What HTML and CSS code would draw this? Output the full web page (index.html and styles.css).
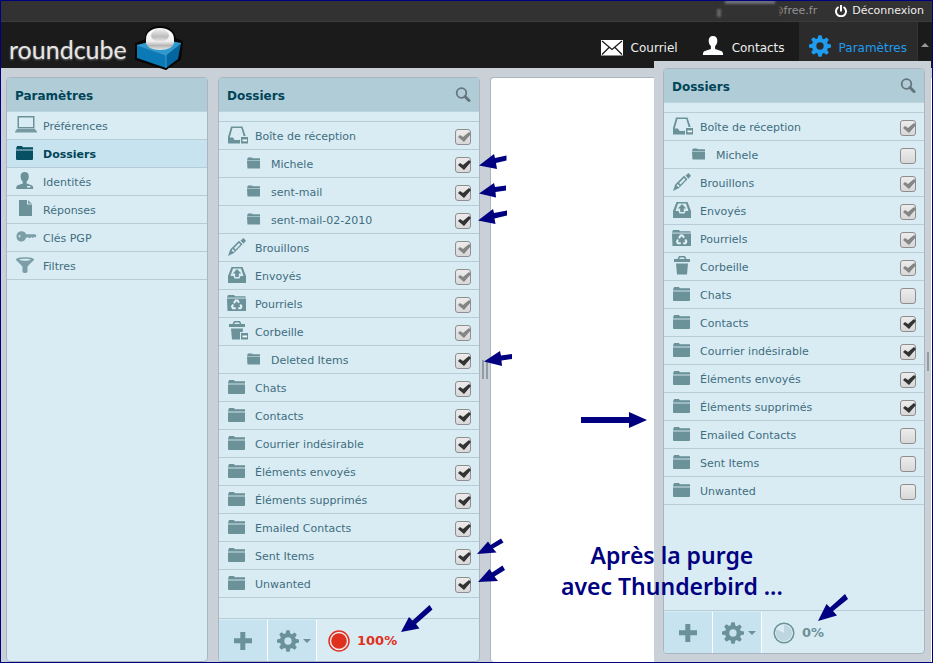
FILE: index.html
```html
<!DOCTYPE html>
<html lang="fr">
<head>
<meta charset="utf-8">
<title>Roundcube – Dossiers</title>
<link rel="stylesheet" href="styles.css">
</head>
<body>
<svg class="sprite" aria-hidden="true">
  <symbol id="folder" viewBox="0 0 22 21"><path opacity=".55" d="M1 4h17v4H1z"/><path d="M2 3h5l1 1.500h10V6H1.500z"/><path d="M1 8h17v8.500h-.5v.5h-16v-.5H1z"/></symbol>
  <symbol id="subfolder" viewBox="0 0 22 21"><path opacity=".5" d="M4 5h13v3H4z"/><path d="M5 4.500h4l1 1h7V7H4.500z"/><path d="M4 8h13v7.500H4.500z"/></symbol>
  <symbol id="minus" viewBox="0 0 22 21"><path d="M13 11h8v8h-8z" fill="#d9ecf4"/><path d="M14 12h7v6.500h-7z"/><path d="M15.500 14.500h4.500v1.800h-4.500z" fill="#fff"/></symbol>
  <symbol id="inbox" viewBox="0 0 22 21"><path fill-rule="evenodd" d="M4 1.500h11.500L19 12v6.500H1V12zM5.500 3 2.800 12.500H6L7.500 15h5L14 12.500h3L14.300 3z"/></symbol>
  <symbol id="pencil" viewBox="0 0 22 21"><path fill-rule="evenodd" d="m1 19 2.200-6.500L12 3.700l3.500 3.500L7 16zM4.500 13.200l2 2 1.200-1.200-2-2zM7 11l1.500 1.500 5-5L12 6z"/><path d="M13.500 3.500 16.500 1 19 3.700l-2.500 3z"/></symbol>
  <symbol id="outbox" viewBox="0 0 22 21"><path fill-rule="evenodd" d="M4.500 2h11L19 11v7H1v-7zM6 3.500 3.500 11h3l1 2.500h5l1-2.500h3L14 3.500z"/><path d="m10 4 4.200 4.500h-2.400V12H8.200V8.500H5.800z"/></symbol>
  <symbol id="junk" viewBox="0 0 22 21"><path d="M1 2h6l1 1.200h10.500V4.500H0z"/><path opacity=".5" d="M0 4.500h19V6H0z"/><path d="M0 6h19v12H.5z"/><g fill="none" stroke="#e4f1f6" stroke-width="2"><path d="m7 10.200 1.600-2.700h2l1.400 2.200M13.300 11.500l1.100 2-.9 1.700h-2.300M8.800 15.200H5.900L5 13.500l1.100-2"/></g></symbol>
  <symbol id="trash" viewBox="0 0 22 21"><path fill-rule="evenodd" d="M2 3h3.500L7 0h6l1.500 3H18v3H2zM8 1.500 7.300 3h5.400L12 1.500z"/><path d="M4 7.500h12l-1 11H5z"/></symbol>
  <symbol id="laptop" viewBox="0 0 22 21"><path fill-rule="evenodd" d="M2.500 1h17v12h-17zM4 2.500V12h14V2.500z"/><path opacity=".9" d="M2.500 13.500h17l2.500 3v1H0v-1z"/></symbol>
  <symbol id="person" viewBox="0 0 22 21"><path fill-rule="evenodd" d="M9.800 1c2.700 0 4.200 2 4 4.700-.1 2.300-1 4-2.200 5v1.800l5 1.800c1.200.5 1.600 1.700 1.600 3.700H1.200c0-2 .4-3.200 1.600-3.700l5-1.800v-1.800c-1.200-1-2.100-2.700-2.200-5C5.400 3 7 1 9.800 1zM12 15v1.500h3.500V15z"/></symbol>
  <symbol id="page" viewBox="0 0 22 21"><path d="M4 1h8v4.500h5V17H4z"/><path opacity=".8" d="m13 1 4 3.800h-4z"/></symbol>
  <symbol id="key" viewBox="0 0 22 21"><path opacity=".85" fill-rule="evenodd" d="M6.500 4.300c2.400 0 4 1.200 4.600 3h9.200l1.200 1.600-1.200 1.700-1.300-.8-1 1.500-1.500-1.200-1.500 1.200-1.300-.8h-2.600c-.8 2.700-2.300 4-4.600 4-3 0-5-2.100-5-5.100s2-5.100 5-5.100zM3.800 8.300v2h1.600v-2z"/></symbol>
  <symbol id="funnel" viewBox="0 0 22 21"><path fill-rule="evenodd" opacity=".85" d="M1 4.500c0-3 18-3 18 0 0 1.300-6.500 6-6.500 7.500V17c-1 1.300-4 1.300-5 0v-5C7.500 10.500 1 5.800 1 4.500zm3 .2c3 1.300 9 1.300 12 0-3-1.300-9-1.300-12 0z"/></symbol>
  <symbol id="search" viewBox="0 0 16 16"><circle cx="6.500" cy="6" r="4.800" fill="none" stroke="#65757c" stroke-width="1.800"/><path d="m10 9.500 4 4" stroke="#65757c" stroke-width="3" stroke-linecap="round"/></symbol>
  <symbol id="plus" viewBox="0 0 18 18"><path d="M6.300 0h5v6.300H18v5h-6.700V18h-5v-6.700H0v-5h6.300z"/></symbol>
  <symbol id="gear" viewBox="0 0 24 24"><path fill-rule="evenodd" d="m10 1 .5-.8h3L14 1l.5 2.700 1.800.8 2.300-1.600 1 .1 1.600 1.600.2 1-1.700 2.300.8 1.800 2.700.5.800.5v2.800l-.8.500-2.700.5-.8 1.800 1.700 2.300-.2 1-1.600 1.600-1 .2-2.300-1.700-1.800.8L14 23l-.5.800h-3L10 23l-.5-2.700-1.800-.8-2.300 1.700-1-.2-1.600-1.600-.2-1 1.700-2.300-.8-1.800L.8 13.800 0 13.300v-2.800l.8-.5 2.700-.5.800-1.800-1.700-2.300.2-1 1.600-1.600 1-.1 2.300 1.600 1.800-.8zM12 8a4 4 0 1 0 0 8 4 4 0 0 0 0-8z"/></symbol>
</svg>

<div class="topbar">
  <span class="user"><span class="smudge"></span>@free.fr</span>
  <a class="logout" href="#"><svg class="power" viewBox="0 0 12 12"><path d="M3.500 2a5 5 0 1 0 5 0M6 0v6.500" fill="none" stroke="#fff" stroke-width="2"/></svg>Déconnexion</a>
</div>

<header class="header">
  <a class="logo" href="#"><span class="wordmark">roundcube</span>
    <svg class="cube" viewBox="0 0 48 44">
      <defs>
        <linearGradient id="ball" x1="0" y1="0" x2="0" y2="1"><stop offset="0" stop-color="#fff"/><stop offset=".6" stop-color="#efefef"/><stop offset=".8" stop-color="#b5b5b5"/><stop offset="1" stop-color="#e8e8e8"/></linearGradient>
        <linearGradient id="shine" x1="0" y1="0" x2="0" y2="1"><stop offset="0" stop-color="#eee"/><stop offset=".6" stop-color="#bdbdbd"/><stop offset="1" stop-color="#ececec"/></linearGradient>
      </defs>
      <path d="M1 18 11 14C11 5 17 1 25 1s14 4 15 12l7 3-2 17-14 10L1 33z" fill="#060606" stroke="#060606" stroke-width="2" stroke-linejoin="round"/>
      <path d="m2 19 23-6 21 4-15 12z" fill="#2d9ad0"/>
      <path d="m2 19 29 10v13L2 32z" fill="#0b79b5"/>
      <path d="m31 29 15-12-3 16-12 9z" fill="#0466a0"/>
      <path d="m2 19 29 10 15-12M31 29v13" fill="none" stroke="#4aa9d8" stroke-width=".8"/>
      <path d="M11 13C11 6 17 2 25 2s14 4 14 11v3c0 5-6 8-14 8s-14-3-14-8z" fill="url(#ball)"/>
      <ellipse cx="25" cy="9.500" rx="9" ry="6.500" fill="url(#shine)"/>
    </svg>
  </a>
  <nav class="nav">
    <a href="#"><svg class="nav-icon" viewBox="0 0 22 22"><path d="M0 5h22v15.500H0z" fill="#fff"/><path d="m1 6 10 8.500L21 6M1 19.500l7-7M21 19.500l-7-7" fill="none" stroke="#1b1b1b" stroke-width="1.300"/></svg>Courriel</a>
    <a href="#"><svg class="nav-icon" viewBox="0 0 22 22"><path d="M11 1c3 0 4.500 2 4.300 5-.1 2.500-1 4-2.200 5v3l6 2c1.500.6 2 1.500 2 4H.9c0-2.500.5-3.400 2-4l6-2v-3c-1.200-1-2.100-2.500-2.200-5C6.500 3 8 1 11 1z" fill="#fff"/></svg>Contacts</a>
    <a class="active" href="#"><svg class="nav-icon"><use href="#gear"/></svg>Paramètres</a>
  </nav>
  <button class="toggle" type="button" aria-label="Réduire"></button>
</header>

<main class="main">
  <section class="panel settings">
    <h2 class="title">Paramètres</h2>
    <ul class="list">
      <li><a class="row" href="#"><svg class="icon"><use href="#laptop"/></svg>Préférences</a></li>
      <li><a class="row selected" href="#"><svg class="icon"><use href="#folder"/></svg>Dossiers</a></li>
      <li><a class="row" href="#"><svg class="icon"><use href="#person"/></svg>Identités</a></li>
      <li><a class="row" href="#"><svg class="icon"><use href="#page"/></svg>Réponses</a></li>
      <li><a class="row" href="#"><svg class="icon"><use href="#key"/></svg>Clés PGP</a></li>
      <li><a class="row" href="#"><svg class="icon"><use href="#funnel"/></svg>Filtres</a></li>
    </ul>
  </section>

  <section class="panel folders">
    <h2 class="title">Dossiers<svg class="search"><use href="#search"/></svg></h2>
    <ul class="list spaced">
      <li><label class="row"><svg class="icon"><use href="#inbox"/><use href="#minus"/></svg>Boîte de réception<input type="checkbox" checked disabled></label></li>
      <li><label class="row sub"><svg class="icon"><use href="#subfolder"/></svg>Michele<input type="checkbox" checked></label></li>
      <li><label class="row sub"><svg class="icon"><use href="#subfolder"/></svg>sent-mail<input type="checkbox" checked></label></li>
      <li><label class="row sub"><svg class="icon"><use href="#subfolder"/></svg>sent-mail-02-2010<input type="checkbox" checked></label></li>
      <li><label class="row"><svg class="icon"><use href="#pencil"/></svg>Brouillons<input type="checkbox" checked disabled></label></li>
      <li><label class="row"><svg class="icon"><use href="#outbox"/></svg>Envoyés<input type="checkbox" checked disabled></label></li>
      <li><label class="row"><svg class="icon"><use href="#junk"/></svg>Pourriels<input type="checkbox" checked disabled></label></li>
      <li><label class="row"><svg class="icon"><use href="#trash"/><use href="#minus"/></svg>Corbeille<input type="checkbox" checked disabled></label></li>
      <li><label class="row sub"><svg class="icon"><use href="#subfolder"/></svg>Deleted Items<input type="checkbox" checked></label></li>
      <li><label class="row"><svg class="icon"><use href="#folder"/></svg>Chats<input type="checkbox" checked></label></li>
      <li><label class="row"><svg class="icon"><use href="#folder"/></svg>Contacts<input type="checkbox" checked></label></li>
      <li><label class="row"><svg class="icon"><use href="#folder"/></svg>Courrier indésirable<input type="checkbox" checked></label></li>
      <li><label class="row"><svg class="icon"><use href="#folder"/></svg>Éléments envoyés<input type="checkbox" checked></label></li>
      <li><label class="row"><svg class="icon"><use href="#folder"/></svg>Éléments supprimés<input type="checkbox" checked></label></li>
      <li><label class="row"><svg class="icon"><use href="#folder"/></svg>Emailed Contacts<input type="checkbox" checked></label></li>
      <li><label class="row"><svg class="icon"><use href="#folder"/></svg>Sent Items<input type="checkbox" checked></label></li>
      <li><label class="row"><svg class="icon"><use href="#folder"/></svg>Unwanted<input type="checkbox" checked></label></li>
    </ul>
    <footer class="footer">
      <button class="tool" type="button" aria-label="Ajouter"><svg class="plus"><use href="#plus"/></svg></button>
      <button class="tool menu" type="button" aria-label="Actions"><svg class="gear"><use href="#gear"/></svg></button>
      <span class="quota full"><svg class="dial" viewBox="0 0 22 22"><circle cx="11" cy="11" r="10" fill="#eef3f5" stroke="#df3020" stroke-width="1.500"/><circle cx="11" cy="11" r="7.800" fill="#df3020"/></svg>100%</span>
    </footer>
  </section>

  <div class="splitter"><span class="grip"></span></div>
  <section class="content"></section>
</main>

<aside class="overlay">
  <section class="panel">
    <h2 class="title">Dossiers<svg class="search"><use href="#search"/></svg></h2>
    <ul class="list spaced">
      <li><label class="row"><svg class="icon"><use href="#inbox"/><use href="#minus"/></svg>Boîte de réception<input type="checkbox" checked disabled></label></li>
      <li><label class="row sub"><svg class="icon"><use href="#subfolder"/></svg>Michele<input type="checkbox"></label></li>
      <li><label class="row"><svg class="icon"><use href="#pencil"/></svg>Brouillons<input type="checkbox" checked disabled></label></li>
      <li><label class="row"><svg class="icon"><use href="#outbox"/></svg>Envoyés<input type="checkbox" checked disabled></label></li>
      <li><label class="row"><svg class="icon"><use href="#junk"/></svg>Pourriels<input type="checkbox" checked disabled></label></li>
      <li><label class="row"><svg class="icon"><use href="#trash"/></svg>Corbeille<input type="checkbox" checked disabled></label></li>
      <li><label class="row"><svg class="icon"><use href="#folder"/></svg>Chats<input type="checkbox"></label></li>
      <li><label class="row"><svg class="icon"><use href="#folder"/></svg>Contacts<input type="checkbox" checked></label></li>
      <li><label class="row"><svg class="icon"><use href="#folder"/></svg>Courrier indésirable<input type="checkbox" checked></label></li>
      <li><label class="row"><svg class="icon"><use href="#folder"/></svg>Éléments envoyés<input type="checkbox" checked></label></li>
      <li><label class="row"><svg class="icon"><use href="#folder"/></svg>Éléments supprimés<input type="checkbox" checked></label></li>
      <li><label class="row"><svg class="icon"><use href="#folder"/></svg>Emailed Contacts<input type="checkbox"></label></li>
      <li><label class="row"><svg class="icon"><use href="#folder"/></svg>Sent Items<input type="checkbox"></label></li>
      <li><label class="row"><svg class="icon"><use href="#folder"/></svg>Unwanted<input type="checkbox"></label></li>
    </ul>
    <footer class="footer">
      <button class="tool" type="button" aria-label="Ajouter"><svg class="plus"><use href="#plus"/></svg></button>
      <button class="tool menu" type="button" aria-label="Actions"><svg class="gear"><use href="#gear"/></svg></button>
      <span class="quota"><svg class="dial" viewBox="0 0 22 22"><circle cx="11" cy="11" r="9.800" fill="#d9ecf4" stroke="#6b9199" stroke-width="1.500"/><path d="M11 11V3a8 8 0 1 1-7.200 4.500z" fill="#bdd6df"/></svg>0%</span>
    </footer>
  </section>
  <span class="edge-grip"></span>
</aside>

<svg class="arrows" viewBox="0 0 933 663" aria-hidden="true">
  <path d="m479 165.500 15-11.500 1 4 11.500-2.500v5l-10.500 2.500 1 6z"/>
  <path d="m479 193.500 15-10.500 1 4 11-1.500v5l-10.500 1.500.5 5.500z"/>
  <path d="m478 220.500 15-11.500 1 4 13-2.500v5l-12.500 3 1 5.500z"/>
  <path d="m484 361.500 16-10.500 1 4.500 11-1.500v5l-10.500 1.500.5 5.500z"/>
  <path d="m477 554 11-12.500 2.500 3.500 10.500-6.500 2.500 4-10.500 6 3.500 4z"/>
  <path d="m478 582 11.500-13 2.500 3.500 10.500-7 2.500 4.500-10.500 6.500 3.500 4.500z"/>
  <path d="m401 632 8-15 3.500 3.500 17-15.500 3 4.500-16.500 14.500 3.500 4.500z"/>
  <path d="M581 417h48v-5l18 8-18 8v-5h-48z"/>
  <path d="m818 621 8.500-17 3.500 3.500 15-13.500 3 5-15 12 4 4.500z"/>
</svg>
<p class="note">Après la purge<br>avec Thunderbird ...</p>
</body>
</html>
```
FILE: styles.css
```css
*, ::before, ::after { box-sizing: border-box; }

body {
  position: relative;
  display: flex;
  flex-direction: column;
  min-height: 100vh;
  margin: 0;
  border: 1px solid #000080;
  background: #c9d0d8;
  color: #3f6d7e;
  font: 11px/16px "DejaVu Sans", sans-serif;
}

a { color: inherit; text-decoration: none; }
button { padding: 0; border: 0; background: none; }
svg { flex: none; fill: currentColor; }
.sprite { position: absolute; width: 0; height: 0; }

.topbar {
  display: flex;
  align-items: center;
  justify-content: flex-end;
  gap: 18px;
  height: 21px;
  padding-right: 8px;
  border-bottom: 1px solid #3b3b3b;
  background: #323232;
}
.user { position: relative; color: #929292; }
.smudge {
  position: absolute;
  top: -4px;
  left: -56px;
  width: 63px;
  height: 20px;
  background:
    linear-gradient(#6d6f78, #6d6f78) 8px 0 / 50px 5px no-repeat,
    linear-gradient(#666, #666) 0 10px / 4px 8px no-repeat,
    #323232;
  filter: blur(1px);
}
.logout { display: flex; align-items: center; gap: 5px; color: #eee; }
.power { width: 12px; height: 12px; }

.header {
  display: flex;
  height: 46px;
  background: #1b1b1b;
}
.logo {
  display: flex;
  align-items: center;
  gap: 8px;
  height: 52px;
  padding-left: 8px;
  color: #e6e6e6;
  font: 25px/32px Lato, sans-serif;
  text-shadow: 0 1px 2px #777;
  z-index: 1;
}
.wordmark { padding-top: 2px; }
.cube { width: 48px; height: 44px; }
.nav { display: flex; margin-left: auto; font-size: 12px; color: #eee; }
.nav a { display: flex; align-items: center; gap: 8px; padding: 5px 14px 0 10px; }
.nav .active { padding-right: 10px; background: #2b2b2b; color: #1f9cf0; }
.nav-icon { width: 22px; height: 22px; margin-bottom: 4px; }
.toggle {
  display: grid;
  place-items: center;
  width: 15px;
  border-left: 1px solid #333;
}
.toggle::before {
  content: "";
  border: 4px solid transparent;
  border-top: 0;
  border-bottom-color: #999;
}

.main { display: flex; flex: 1; padding: 9px 0 0 5px; }
.panel {
  display: flex;
  flex-direction: column;
  border: 1px solid #aab5be;
  border-radius: 4px;
  background: #d9ecf4;
  overflow: hidden;
}
.settings { flex: none; width: 202px; margin-right: 10px; }
.folders { flex: none; width: 262px; }

.title {
  display: flex;
  align-items: center;
  justify-content: space-between;
  height: 34px;
  margin: 0;
  padding: 2px 8px 0;
  border-bottom: 1px solid #bbd3da;
  background: #b0ccd7;
  color: #004458;
  font-size: 12px;
}
.search { width: 16px; height: 16px; margin-bottom: 2px; }

.list { flex: 1; margin: 0; padding: 0; list-style: none; }
.spaced::before { content: ""; display: block; height: 10px; border-bottom: 1px solid #b6cdd7; }
.row {
  display: flex;
  align-items: center;
  height: 28px;
  padding: 2px 8px 0;
  border-bottom: 1px solid #b6cdd7;
}
.row.sub { padding-left: 24px; }
.row.selected { background: #c7e3ef; color: #004458; font-weight: bold; }
.icon { width: 22px; height: 21px; margin: 0 6px 2px 0; color: #6b9199; }
.selected .icon { color: #075064; }

input[type="checkbox"] {
  appearance: none;
  align-self: flex-end;
  width: 16px;
  height: 16px;
  margin: 0 0 4px auto;
  border: 1px solid #8e8e8e;
  border-radius: 3px;
  background: linear-gradient(#ececec, #d8d8d8);
}
input:checked::before {
  content: "";
  display: block;
  width: 16px;
  height: 16px;
  margin: -1px;
  background: #333;
  clip-path: polygon(3px 8px, 5px 6px, 8px 8px, 14px 3px, 16px 5px, 9px 13px);
}
input:disabled::before { background: #858585; }

.footer { display: flex; height: 43px; padding-top: 1px; border-top: 1px solid #b6cdd7; }
.tool {
  display: flex;
  align-items: center;
  justify-content: center;
  gap: 4px;
  width: 49px;
  border-right: 1px solid #fff;
  background: #c7e3ef;
  color: #6b9199;
}
.plus { width: 18px; height: 18px; }
.gear { width: 22px; height: 22px; }
.menu { padding-left: 4px; }
.menu::after {
  content: "";
  border: 4px solid transparent;
  border-top-color: #6b9199;
  border-bottom: 0;
}
.quota {
  display: flex;
  align-items: center;
  gap: 7px;
  padding-left: 11px;
  color: #6b9199;
  font-size: 13px;
  font-weight: bold;
}
.quota.full { color: #df3020; }
.dial { width: 22px; height: 22px; }

.splitter { display: grid; place-items: center; flex: none; width: 10px; }
.grip { width: 6px; height: 19px; border: solid #939ca4; border-width: 0 2px; }
.content {
  flex: 1;
  border: solid #aab5be;
  border-width: 1px 0 0 1px;
  border-radius: 4px 0 0 4px;
  background: #fff;
}

.overlay {
  position: absolute;
  top: 60px;
  right: 1px;
  bottom: 0;
  display: flex;
  width: 277px;
  padding: 7px 2px 8px 9px;
  background: #c9d0d8;
}
.overlay .panel { flex: 1; margin-right: 2px; }
.edge-grip { align-self: center; width: 2px; height: 19px; background: #939ca4; }

.arrows {
  position: absolute;
  top: -1px;
  left: -1px;
  width: 933px;
  height: 663px;
  fill: #000080;
  pointer-events: none;
}
.note {
  position: absolute;
  top: 539px;
  left: 560px;
  margin: 0;
  color: #000080;
  font: 600 23px/31px "Noto Sans", "Open Sans", sans-serif;
  text-align: center;
  white-space: nowrap;
}
```
